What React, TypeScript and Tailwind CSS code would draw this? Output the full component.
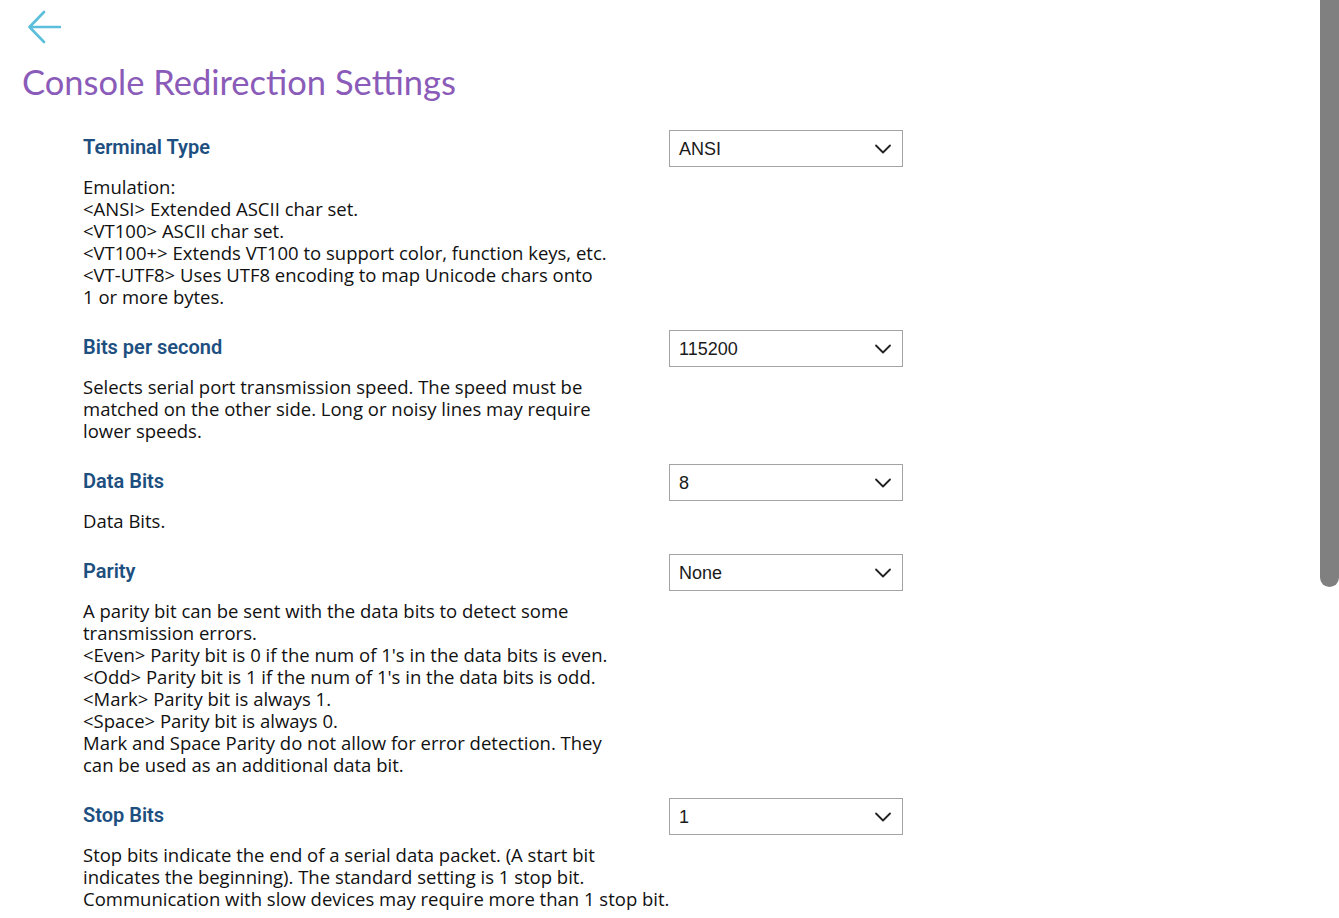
import React from "react";

type Section = { title: string; value: string; lines: string[] };

const sections: Section[] = [
  {
    title: "Terminal Type",
    value: "ANSI",
    lines: [
      "Emulation:",
      "<ANSI> Extended ASCII char set.",
      "<VT100> ASCII char set.",
      "<VT100+> Extends VT100 to support color, function keys, etc.",
      "<VT-UTF8> Uses UTF8 encoding to map Unicode chars onto",
      "1 or more bytes.",
    ],
  },
  {
    title: "Bits per second",
    value: "115200",
    lines: [
      "Selects serial port transmission speed. The speed must be",
      "matched on the other side. Long or noisy lines may require",
      "lower speeds.",
    ],
  },
  {
    title: "Data Bits",
    value: "8",
    lines: ["Data Bits."],
  },
  {
    title: "Parity",
    value: "None",
    lines: [
      "A parity bit can be sent with the data bits to detect some",
      "transmission errors.",
      "<Even> Parity bit is 0 if the num of 1's in the data bits is even.",
      "<Odd> Parity bit is 1 if the num of 1's in the data bits is odd.",
      "<Mark> Parity bit is always 1.",
      "<Space> Parity bit is always 0.",
      "Mark and Space Parity do not allow for error detection. They",
      "can be used as an additional data bit.",
    ],
  },
  {
    title: "Stop Bits",
    value: "1",
    lines: [
      "Stop bits indicate the end of a serial data packet. (A start bit",
      "indicates the beginning). The standard setting is 1 stop bit.",
      "Communication with slow devices may require more than 1 stop bit.",
    ],
  },
];

function Chevron() {
  return (
    <svg width="18" height="10" viewBox="0 0 18 10" fill="none">
      <path d="M2 1.5 L9 8.5 L16 1.5" stroke="#222" strokeWidth="1.8" strokeLinecap="round" strokeLinejoin="round" />
    </svg>
  );
}

export default function App() {
  return (
    <div className="relative h-[918px] w-[1339px] overflow-hidden bg-white">
      <div className="pl-[27px] pt-[10px]">
        <svg width="34" height="34" viewBox="0 0 34 34" fill="none">
          <path d="M33 17 H2.5 M17 2 L2.5 17 L17 32" stroke="#5bbfdc" strokeWidth="2.6" strokeLinecap="round" strokeLinejoin="round" />
        </svg>
      </div>
      <h1 className="ml-[22px] mt-[18px] text-[34.5px] leading-[40px] text-[#8a5bb8] font-['Lato',sans-serif]">
        Console Redirection Settings
      </h1>
      <div className="mt-[28px] flex flex-col gap-[22px] pl-[83px]">
        {sections.map((s) => (
          <div key={s.title}>
            <div className="grid grid-cols-[586px_234px] items-center">
              <div className="text-[20px] font-semibold text-[#1d4f80] font-['Roboto',sans-serif] leading-[24px] -mt-[4px]">
                {s.title}
              </div>
              <div className="flex h-[37px] items-center justify-between border border-[#a3a3a3] pl-[9px] pr-[10px] font-['Liberation_Sans',Arial,sans-serif] text-[18px] text-[#1a1a1a]">
                <span className="mt-[1px]">{s.value}</span>
                <Chevron />
              </div>
            </div>
            <div className="mt-[9px] font-['Open_Sans',sans-serif] text-[18.5px] leading-[22px] text-[#111]">
              {s.lines.map((l, i) => (
                <div key={i} className="whitespace-pre">{l}</div>
              ))}
            </div>
          </div>
        ))}
      </div>
      <div className="absolute right-0 top-0 h-[587px] w-[19px] rounded-b-[10px] bg-[#808080]" />
    </div>
  );
}
